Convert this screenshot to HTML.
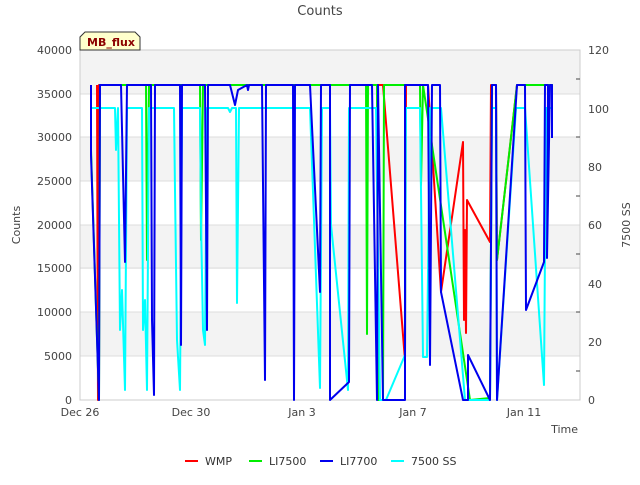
<!DOCTYPE html>
<html><head><style>
body{margin:0;background:#fff;font-family:"Liberation Sans","DejaVu Sans",sans-serif;}
</style></head><body>
<svg width="640" height="480" xmlns="http://www.w3.org/2000/svg" font-family="DejaVu Sans, Liberation Sans, sans-serif">
<rect width="640" height="480" fill="#fff"/>
<g fill="#f3f3f3">
<rect x="80" y="50" width="500" height="44"/>
<rect x="80" y="137" width="500" height="44"/>
<rect x="80" y="225" width="500" height="44"/>
<rect x="80" y="312" width="500" height="44"/>
</g>
<g stroke="#dddddd" stroke-width="1">
<line x1="80" y1="94" x2="580" y2="94"/><line x1="80" y1="137" x2="580" y2="137"/>
<line x1="80" y1="181" x2="580" y2="181"/><line x1="80" y1="225" x2="580" y2="225"/>
<line x1="80" y1="268" x2="580" y2="268"/><line x1="80" y1="312" x2="580" y2="312"/>
<line x1="80" y1="356" x2="580" y2="356"/>
</g>
<rect x="80" y="50" width="500" height="350" fill="none" stroke="#cccccc"/>
<g fill="none" stroke-width="2" stroke-linejoin="round">
<polyline stroke="#ff0000" points="97,85 98,400 99,85 121,85 350,85 383,85 405,360 406,85 428,85 441,292 463,142 464,320 465,230 466,333 467,200 490,242 491,85 496,85 497,260 517,85 552,85"/>
<polyline stroke="#00ee00" points="91,150 99,400 100,85 146,85 147,260 149,85 200,85 201,240 203,85 230,85 262,85 366,85 367,334 368,85 377,85 378,400 383,400 384,85 405,85 420,85 421,185 423,85 470,400 490,398 492,85 496,85 497,260 517,85 553,85"/>
<polyline stroke="#00ffff" points="90,108 115,108 116,150 118,108 120,330 122,290 125,390 127,108 142,108 143,330 145,300 147,390 149,108 174,108 175,190 177,340 180,390 182,108 200,108 201,220 203,330 205,345 207,108 228,108 230,112 232,108 236,108 237,303 239,108 262,108 266,108 268,108 283,108 292,108 294,108 305,108 310,108 320,388 322,108 330,108 331,225 348,390 349,108 358,108 362,108 366,108 372,108 376,108 380,400 386,400 405,355 406,108 420,108 423,357 427,357 430,108 437,108 441,108 465,400 490,400 492,108 496,108 497,400 516,108 520,108 525,108 544,385 546,108 552,108"/>
<polyline stroke="#0000ee" points="91,85 91,155 99,400 100,85 121,85 125,262 127,85 151,85 152,320 154,395 155,85 180,85 181,345 182,85 205,85 207,330 208,85 230,85 235,105 238,90 247,85 248,90 249,85 262,85 265,380 266,85 293,85 294,400 295,85 310,85 320,292 321,85 330,85 330,400 349,382 350,85 353,85 358,85 372,85 377,400 378,85 383,400 385,400 405,400 405,85 428,85 430,365 432,85 440,85 441,292 463,400 468,400 468,355 490,400 492,85 496,85 497,400 517,85 525,85 526,310 544,262 545,85 548,85 547,258 550,85 552,85 552,138"/>
</g>
<text x="320" y="15" font-size="13" fill="#444" text-anchor="middle">Counts</text>
<g font-size="11" fill="#444" text-anchor="end">
<text x="72" y="54">40000</text><text x="72" y="98">35000</text><text x="72" y="141">30000</text>
<text x="72" y="185">25000</text><text x="72" y="229">20000</text><text x="72" y="272">15000</text>
<text x="72" y="316">10000</text><text x="72" y="360">5000</text><text x="72" y="404">0</text>
</g>
<g font-size="11" fill="#444">
<text x="588" y="54">120</text><text x="588" y="171">80</text><text x="588" y="229">60</text>
<text x="588" y="113">100</text><text x="588" y="288">40</text><text x="588" y="346">20</text><text x="588" y="404">0</text>
</g>
<g stroke="#444"><line x1="580" y1="79" x2="576" y2="79"/><line x1="580" y1="137" x2="576" y2="137"/><line x1="580" y1="196" x2="576" y2="196"/><line x1="580" y1="254" x2="576" y2="254"/><line x1="580" y1="312" x2="576" y2="312"/><line x1="580" y1="371" x2="576" y2="371"/></g>
<g font-size="11" fill="#444" text-anchor="middle">
<text x="80" y="416">Dec 26</text><text x="191" y="416">Dec 30</text><text x="302" y="416">Jan 3</text>
<text x="413" y="416">Jan 7</text><text x="524" y="416">Jan 11</text>
</g>
<text x="578" y="433" font-size="11" fill="#444" text-anchor="end">Time</text>
<text x="20" y="225" font-size="11" fill="#444" text-anchor="middle" transform="rotate(-90 20 225)">Counts</text>
<text x="630" y="225" font-size="11" fill="#444" text-anchor="middle" transform="rotate(-90 630 225)">7500 SS</text>
<path d="M80,50 L80,37 L85,32 L135,32 L140,37 L140,50 Z" fill="#ffffcc" stroke="#333"/>
<text x="87" y="46" font-size="11" font-weight="bold" fill="#8b0000">MB_flux</text>
<g font-size="11" fill="#333">
<line x1="185" y1="461" x2="198" y2="461" stroke="#ff0000" stroke-width="2"/><text x="205" y="465">WMP</text>
<line x1="249" y1="461" x2="262" y2="461" stroke="#00ee00" stroke-width="2"/><text x="269" y="465">LI7500</text>
<line x1="320" y1="461" x2="333" y2="461" stroke="#0000ee" stroke-width="2"/><text x="340" y="465">LI7700</text>
<line x1="391" y1="461" x2="404" y2="461" stroke="#00ffff" stroke-width="2"/><text x="411" y="465">7500 SS</text>
</g>
</svg>
</body></html>
